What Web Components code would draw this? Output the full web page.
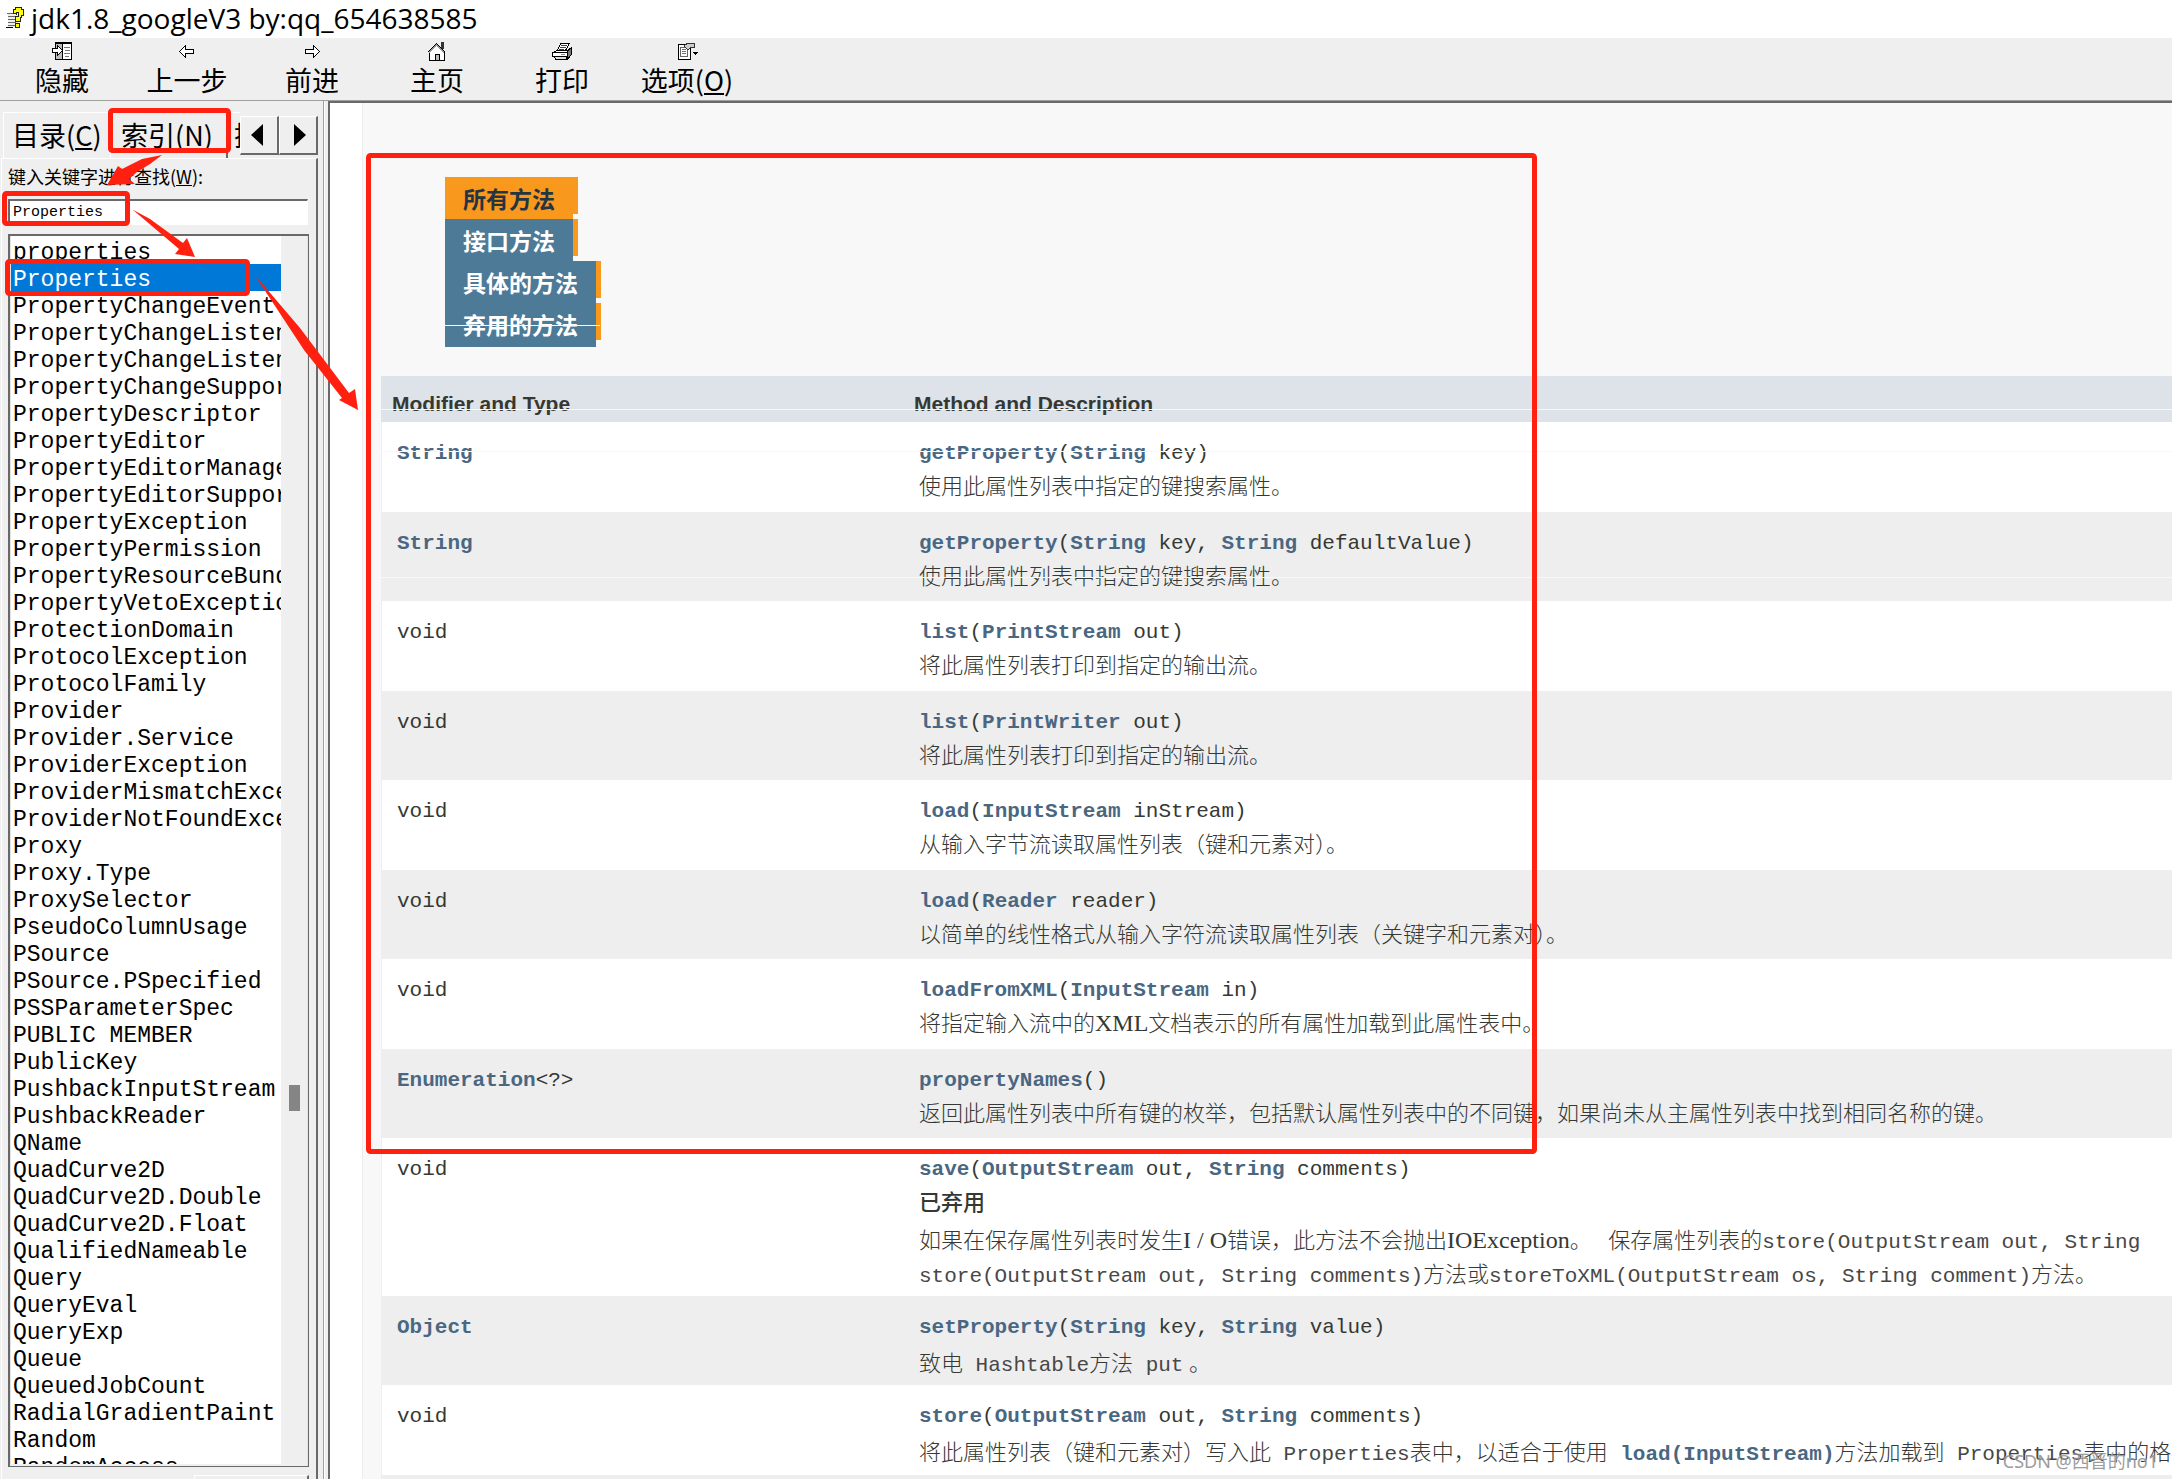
<!DOCTYPE html>
<html lang="zh-CN">
<head>
<meta charset="utf-8">
<title>jdk1.8_googleV3 by:qq_654638585</title>
<style>
html,body{margin:0;height:100%}
body{font-family:"Open Sans","Noto Sans CJK SC",sans-serif;color:#000;background:#fff;overflow:hidden}
</style>
</head>
<body>
<help-window></help-window>

<template id="help-window">
<style>
:host{display:flex;flex-direction:column;height:100vh;position:relative;overflow:hidden;background:#efefef}
main{flex:1;min-height:0;display:flex}
nav-pane{flex:none;width:323px}
.splitter{flex:none;width:4px;background:#efefef;border-left:1px solid #a0a0a0;box-shadow:inset 1px 0 #fff}
doc-pane{flex:1;min-width:0}
</style>
<title-bar>jdk1.8_googleV3 by:qq_654638585</title-bar>
<tool-bar>
<tool-button>
<svg slot="icon" width="20" height="20" shape-rendering="crispEdges"><path d="M3.5 1.5h16v17h-16z" fill="#fff" stroke="#000"/><path d="M4 3h6v15H4z" fill="#bbb"/><path d="M3 2.5h17M10.500 3v15" stroke="#000"/><path d="M12 6.500h6M13 9.500h5M12 12.500h6M13 15.500h4" stroke="#777"/><path d="M0.500 7.500h5v-3l5 5-5 5v-3h-5z" fill="#fff" stroke="#000"/></svg>隐藏</tool-button>
<tool-button><svg slot="icon" width="20" height="20" shape-rendering="crispEdges"><path d="M2.500 10.500l6-6v4h8v4h-8v4z" fill="#fff" stroke="#000"/></svg>上一步</tool-button>
<tool-button><svg slot="icon" width="20" height="20" shape-rendering="crispEdges"><path d="M17.500 10.500l-6-6v4h-8v4h8v4z" fill="#fff" stroke="#000"/></svg>前进</tool-button>
<tool-button><svg slot="icon" width="20" height="20" shape-rendering="crispEdges"><path d="M14 1h3v7h-3z" fill="#333"/><path d="M2.500 10.500l7-7 8 7v9h-15z" fill="#fff" stroke="#000"/><path d="M0.500 11.500l9-9 9 9" fill="none" stroke="#000"/><path d="M2 11.500l7.500-7.500 7.500 7.500" fill="none" stroke="#999"/><path d="M8.500 19v-5.500h4v5.500" fill="#bbb" stroke="#000"/></svg>主页</tool-button>
<tool-button><svg slot="icon" width="20" height="20" shape-rendering="crispEdges"><path d="M5.500 9.500l3-7h9l-4 7z" fill="#fff" stroke="#000"/><path d="M9 4.500h6M8 6.500h6M7 8.500h5" stroke="#444"/><path d="M15 10l4-3v7l-4 5z" fill="#777" stroke="#000"/><path d="M1.500 11.500l3-2h12l-2 2z" fill="#fff" stroke="#000"/><path d="M0.500 11.500h15v4h-15z" fill="#fff" stroke="#000"/><path d="M2.500 15.500h12v3h-11z" fill="#ddd" stroke="#000"/><path d="M9 13.500h4" stroke="#888"/></svg>打印</tool-button>
<tool-button><svg slot="icon" width="20" height="20" shape-rendering="crispEdges"><path d="M1.500 3.500h12v15h-12z" fill="#fff" stroke="#000"/><path d="M3.500 6.500h7v9h-7z" fill="#fff" stroke="#666"/><path d="M5 8.500h4M5 10.500h4M5 12.500h4" stroke="#777"/><path d="M7 5l4-3h6v4h-3l-3 3z" fill="#ccc" stroke="#333"/><path d="M16 11h5l-2.500 3z" fill="#000"/></svg>选项(<u>O</u>)</tool-button>
</tool-bar>
<main>
<nav-pane></nav-pane>
<div class="splitter"></div>
<doc-pane></doc-pane>
</main>
<mark-layer></mark-layer>
</template>

<template id="title-bar">
<style>
:host{flex:none;display:flex;align-items:center;gap:7px;box-sizing:border-box;height:38px;padding:0 0 2px 6px;background:#fff;font-size:28px;line-height:36px}
</style>
<svg width="18" height="22" shape-rendering="crispEdges"><path d="M2 6h10v15H2z" fill="#eee"/><path d="M1 6.500h8M2 9.500h7M2 12.500h7M2 15.500h8M2 18.500h8" stroke="#666"/><path d="M0 20.500h7" stroke="#000"/><path d="M7 6V2h2V0h6v2h2v6h-2v2h-1v4H9V9h3V5H10v2z" fill="#ff0" stroke="#222"/><path d="M9.500 16.500h4v4h-4z" fill="#ff0" stroke="#222"/></svg>
<slot></slot>
</template>

<template id="tool-bar">
<style>
:host{flex:none;display:flex;height:62px;background:#efefef;border-bottom:1px solid #a0a0a0}
</style>
<slot></slot>
</template>

<template id="tool-button">
<style>
:host{display:block;width:125px}
button{display:flex;flex-direction:column;align-items:center;width:100%;height:100%;padding:3px 1px 0 0;border:0;background:none;font:27px/38px "Noto Sans CJK SC",sans-serif;color:#000;white-space:nowrap}
::slotted(svg){display:block;overflow:visible}
</style>
<button type="button"><slot name="icon"></slot><span><slot></slot></span></button>
</template>

<template id="nav-pane">
<style>
:host{display:flex;flex-direction:column;background:#efefef;font-family:"Noto Sans CJK SC",sans-serif}
.tabs{flex:none;display:flex;height:46px;margin:11px 5px 0 3px}
.tab{flex:none;border:0;border-top:1px solid #fff;border-left:1px solid #fff;background:none;padding:0 0 2px 8px;font:27px/42px "Noto Sans CJK SC",sans-serif;color:#000;text-align:left;white-space:nowrap}
.t1{width:107px}
.t2{width:118px;padding-left:10px;border-right:2px solid #696969}
.t3{flex:1;min-width:0;overflow:hidden;padding-left:6px;border-left:0}
.step{flex:none;align-self:center;display:grid;place-items:center;width:39px;height:39px;padding:0 4px 0 0;background:#efefef;border:1px solid #fff;border-right:2px solid #696969;border-bottom:2px solid #696969}
.step+.step{padding:0 0 0 4px}
.panel{flex:1;min-height:0;display:flex;flex-direction:column;margin:0 5px 0 1px;padding:4px 7px 0 6px;border:1px solid #fff;border-right:2px solid #696969;border-bottom:0;box-sizing:border-box}
label{flex:none;font-size:18px;line-height:27px;white-space:nowrap}
input{flex:none;box-sizing:border-box;height:26px;margin:9px 1px 9px 0;padding:0 3px;border:2px solid #fff;border-top-color:#696969;border-left-color:#696969;border-right-width:1px;border-radius:0;background:#fff;font:15px "Liberation Mono",monospace;color:#000;outline:0}
index-list{flex:1;min-height:0}
.foot{flex:none;display:flex;justify-content:flex-end;height:4px;margin-top:8px;overflow:hidden}
.foot button{width:115px;height:36px;border:1px solid #fff;border-right:2px solid #696969;background:#efefef}
</style>
<div class="tabs">
<button class="tab t1" type="button">目录(<u>C</u>)</button>
<button class="tab t2" type="button">索引(<u>N</u>)</button>
<button class="tab t3" type="button">搜</button>
<button class="step" type="button" aria-label="上一个"><svg width="12" height="22"><path d="M12 0v22L0 11z"/></svg></button>
<button class="step" type="button" aria-label="下一个"><svg width="12" height="22"><path d="M0 0v22l12-11z"/></svg></button>
</div>
<div class="panel">
<label for="key">键入关键字进行查找(<u>W</u>):</label>
<input id="key" type="text" value="Properties">
<index-list></index-list>
<div class="foot"><button type="button" aria-label="显示"></button></div>
</div>
</template>

<template id="index-list">
<style>
:host{display:flex;box-sizing:border-box;border:2px solid #696969;border-right-width:1px;border-bottom-width:1px;background:#efefef;overflow:hidden}
ul{flex:1;min-width:0;margin:0 0 2px;padding:1px 0 0;list-style:none;overflow:hidden;background:#fff;border-left:1px solid #e3e3e3;font:23px/32px "Liberation Mono",monospace}
li{height:27px;padding-left:2px;white-space:pre}
li[aria-selected=true]{background:#0078d7;color:#fff}
.bar{flex:none;width:26px;display:flex;flex-direction:column;align-items:center;border-right:1px solid #e3e3e3}
.bar::before{content:"";flex:849}
.bar::after{content:"";flex:355}
.thumb{width:11px;height:26px;background:#858585}
</style>
<ul role="listbox" aria-label="索引"></ul>
<div class="bar"><div class="thumb"></div></div>
</template>

<template id="doc-pane">
<style>
:host{display:flex;box-sizing:border-box;padding-left:32px;background:#fff;border-top:2px solid #696969;border-left:2px solid #696969;overflow:hidden}
article{flex:1;min-width:0;padding:74px 0 0 18px;background:#f8f8f8;border-left:1px solid #ededed}
method-tabs{margin:0 0 29px 64px}
</style>
<article>
<method-tabs></method-tabs>
<method-table></method-table>
</article>
</template>

<template id="method-tabs">
<style>
:host{display:block}
ul{margin:0;padding:0 0 2px;list-style:none;font:bold 23px/42px "Noto Sans CJK SC",sans-serif}
li{display:flex;height:42px}
li::after{content:"";width:5px;height:37px;background:#f8981d}
a{display:block;box-sizing:border-box;height:42px;padding:0 18px;background:#4d7a97;color:#fff;text-decoration:none;line-height:42px}
li:first-child a{background:#f8981d;color:#253441}
li:last-child a{height:44px}
</style>
<ul>
<li><a href="#all">所有方法</a></li>
<li><a href="#interface">接口方法</a></li>
<li><a href="#concrete">具体的方法</a></li>
<li><a href="#deprecated">弃用的方法</a></li>
</ul>
</template>

<template id="method-table">
<style>
:host{display:block;font:300 22px/34px "Liberation Serif","Noto Sans CJK SC",serif;color:#353833}
table{width:100%;border-collapse:separate;border-spacing:0;table-layout:fixed;background:#fff}
th{box-sizing:border-box;height:46px;padding:10px 11px 0;background:#dee3e9;text-align:left;font:bold 21px/34px "Liberation Sans",sans-serif;color:#353833}
th:first-child{width:522px}
td{height:77px;padding:13px 0 0 16px;vertical-align:top;white-space:nowrap}
tr:nth-child(even) td{height:76px;background:#eeeeef}
td:first-child{box-shadow:inset 1px 0 #eee}
td>div:nth-child(2){padding-top:1px}
code{font:21px/1 "Liberation Mono",monospace;color:#474747}
.sig,.type{color:#353833}
a{color:#4a6782;font-weight:bold;text-decoration:none}
.latin{font-size:24px;line-height:1}
.dep{font-weight:500}
td>div.note{padding-top:4px}
tr.wide td{height:145px}
</style>
<table>
<thead><tr><th>Modifier and Type</th><th>Method and Description</th></tr></thead>
<tbody>
<tr><td><code class="type"><a href="#s">String</a></code></td><td><div><code class="sig"><a href="#m">getProperty</a>(<a href="#s">String</a> key)</code></div><div>使用此属性列表中指定的键搜索属性。</div></td></tr>
<tr><td><code class="type"><a href="#s">String</a></code></td><td><div><code class="sig"><a href="#m">getProperty</a>(<a href="#s">String</a> key, <a href="#s">String</a> defaultValue)</code></div><div>使用此属性列表中指定的键搜索属性。</div></td></tr>
<tr><td><code class="type">void</code></td><td><div><code class="sig"><a href="#m">list</a>(<a href="#s">PrintStream</a> out)</code></div><div>将此属性列表打印到指定的输出流。</div></td></tr>
<tr><td><code class="type">void</code></td><td><div><code class="sig"><a href="#m">list</a>(<a href="#s">PrintWriter</a> out)</code></div><div>将此属性列表打印到指定的输出流。</div></td></tr>
<tr><td><code class="type">void</code></td><td><div><code class="sig"><a href="#m">load</a>(<a href="#s">InputStream</a> inStream)</code></div><div>从输入字节流读取属性列表（键和元素对）。</div></td></tr>
<tr><td><code class="type">void</code></td><td><div><code class="sig"><a href="#m">load</a>(<a href="#s">Reader</a> reader)</code></div><div>以简单的线性格式从输入字符流读取属性列表（关键字和元素对）。</div></td></tr>
<tr><td><code class="type">void</code></td><td><div><code class="sig"><a href="#m">loadFromXML</a>(<a href="#s">InputStream</a> in)</code></div><div>将指定输入流中的<span class="latin">XML</span>文档表示的所有属性加载到此属性表中。</div></td></tr>
<tr><td><code class="type"><a href="#s">Enumeration</a>&lt;?&gt;</code></td><td><div><code class="sig"><a href="#m">propertyNames</a>()</code></div><div>返回此属性列表中所有键的枚举，包括默认属性列表中的不同键，如果尚未从主属性列表中找到相同名称的键。</div></td></tr>
<tr class="wide"><td><code class="type">void</code></td><td><div><code class="sig"><a href="#m">save</a>(<a href="#s">OutputStream</a> out, <a href="#s">String</a> comments)</code></div><div class="dep">已弃用</div><div class="note">如果在保存属性列表时发生<span class="latin">I / O</span>错误，此方法不会抛出<span class="latin">IOException</span>。 &nbsp; 保存属性列表的<code>store(OutputStream out, String</code></div><div><code>store(OutputStream out, String comments)</code>方法或<code>storeToXML(OutputStream os, String comment)</code>方法。</div></td></tr>
<tr><td><code class="type"><a href="#s">Object</a></code></td><td><div><code class="sig"><a href="#m">setProperty</a>(<a href="#s">String</a> key, <a href="#s">String</a> value)</code></div><div class="note">致电<code> Hashtable</code>方法<code> put</code> 。</div></td></tr>
<tr><td><code class="type">void</code></td><td><div><code class="sig"><a href="#m">store</a>(<a href="#s">OutputStream</a> out, <a href="#s">String</a> comments)</code></div><div class="note">将此属性列表（键和元素对）写入此<code> Properties</code>表中，以适合于使用<code> <a href="#s">load(InputStream)</a></code>方法加载到<code> Properties</code>表中的格</div></td></tr>
<tr><td></td><td></td></tr>
</tbody>
</table>
</template>

<template id="mark-layer">
<style>
:host{position:absolute;inset:0;pointer-events:none}
svg{position:absolute;left:0;top:0;width:100%;height:100%}
p{position:absolute;right:14px;bottom:6px;margin:0;font:18px/24px "Noto Sans","Noto Sans CJK SC",sans-serif;color:#8c8c8c;opacity:.85;text-shadow:0 0 1px #fff}
</style>
<svg>
<g fill="#f8f8f8"><path d="M445 325h155v1H445zM381 409h1791v1H381zM381 451h1791v1H381zM381 577h1791v1H381z"/></g>
<g fill="none" stroke="#ff2010" stroke-width="5" stroke-linejoin="round">
<rect x="110.500" y="110.500" width="118" height="40" rx="2"/>
<rect x="4.500" y="193.500" width="123" height="30" rx="2"/>
<rect x="7.500" y="261.500" width="240" height="32" rx="2"/>
<rect x="368.500" y="155.500" width="1166" height="996" rx="2"/>
</g>
<g fill="#ff2010">
<path d="M162 155L142 159 122 169 118 166 107 185 135 184 129 179 137 172 150 164z"/>
<path d="M132.500 209.500L150 219 183 243 187 238 195 257 175 254 179 249z"/>
<path d="M254 274L300 328 349 393 355 389 358 410 339 400 342 398 304 350z"/>
</g>
</svg>
<p>CSDN @西晋的no1</p>
</template>

<script>
const NAMES = ['title-bar','tool-bar','tool-button','nav-pane','doc-pane','method-tabs','method-table','mark-layer','help-window'];

class TemplateElement extends HTMLElement {
  constructor() {
    super();
    const source = document.getElementById(this.localName);
    this.attachShadow({ mode: 'open' }).append(document.importNode(source.content, true));
  }
}

customElements.define('index-list', class extends TemplateElement {
  connectedCallback() {
    const list = this.shadowRoot.querySelector('ul');
    const entries = `properties|Properties|PropertyChangeEvent|PropertyChangeListener|PropertyChangeListenerProxy|PropertyChangeSupport|PropertyDescriptor|PropertyEditor|PropertyEditorManager|PropertyEditorSupport|PropertyException|PropertyPermission|PropertyResourceBundle|PropertyVetoException|ProtectionDomain|ProtocolException|ProtocolFamily|Provider|Provider.Service|ProviderException|ProviderMismatchException|ProviderNotFoundException|Proxy|Proxy.Type|ProxySelector|PseudoColumnUsage|PSource|PSource.PSpecified|PSSParameterSpec|PUBLIC MEMBER|PublicKey|PushbackInputStream|PushbackReader|QName|QuadCurve2D|QuadCurve2D.Double|QuadCurve2D.Float|QualifiedNameable|Query|QueryEval|QueryExp|Queue|QueuedJobCount|RadialGradientPaint|Random|RandomAccess`.split('|');
    list.replaceChildren(...entries.map(name => {
      const item = document.createElement('li');
      item.setAttribute('role', 'option');
      item.setAttribute('aria-selected', String(name === 'Properties'));
      item.textContent = name;
      return item;
    }));
  }
});

for (const name of NAMES) customElements.define(name, class extends TemplateElement {});
</script>
</body>
</html>
